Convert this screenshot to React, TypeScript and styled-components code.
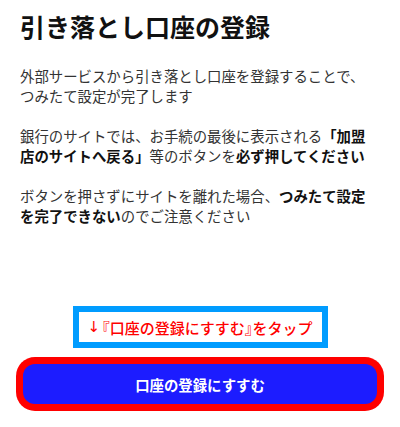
import styled, { createGlobalStyle } from 'styled-components';

const GlobalStyle = createGlobalStyle`
	html, body {
		margin: 0;
		padding: 0;
		background: #fff;
	}
	body {
		font-family: "Noto Sans CJK JP", "Noto Sans", sans-serif;
		-webkit-font-smoothing: antialiased;
	}
`;

const Page = styled.div`
	display: flex;
	flex-direction: column;
	height: 427px;
	box-sizing: border-box;
	padding: 9px 20px 23px;
`;

const Title = styled.h1`
	margin: 0;
	font-size: 25px;
	line-height: 35px;
	font-weight: 700;
	color: #111;
	white-space: nowrap;
`;

const Body = styled.div`
	display: flex;
	flex-direction: column;
	gap: 20px;
	margin-top: 22px;
`;

const Paragraph = styled.p`
	margin: 0;
	font-size: 14.4px;
	line-height: 20px;
	color: #333;
	white-space: nowrap;

	strong {
		font-weight: 700;
		color: #111;
	}
`;

const Footer = styled.div`
	margin-top: auto;
	display: flex;
	flex-direction: column;
	align-items: center;
	gap: 16px;
`;

const Hint = styled.div`
	box-sizing: border-box;
	width: 255px;
	height: 42px;
	border: 6px solid #009cff;
	display: flex;
	align-items: center;
	justify-content: center;
	font-size: 15px;
	font-weight: 500;
	color: #ff0000;
	white-space: nowrap;
`;

const Arrow = styled.span`
	font-family: "DejaVu Sans", sans-serif;
	font-size: 15px;
	margin-right: 2px;
`;

const Bracket = styled.span`
	font-feature-settings: "halt";
`;

const PrimaryButton = styled.button`
	width: 354px;
	height: 40px;
	margin: 0 2px;
	border: none;
	border-radius: 12px;
	background: #1c1cff;
	color: #fff;
	font-family: inherit;
	font-size: 14.4px;
	font-weight: 700;
	box-shadow: 0 0 0 7px #ff0000;
	cursor: pointer;
`;

export default function App() {
	return (
		<>
			<GlobalStyle />
			<Page>
				<Title>引き落とし口座の登録</Title>
				<Body>
					<Paragraph>
						外部サービスから引き落とし口座を登録することで、
						<br />
						つみたて設定が完了します
					</Paragraph>
					<Paragraph>
						銀行のサイトでは、お手続の最後に表示される<strong>「加盟</strong>
						<br />
						<strong>店のサイトへ戻る」</strong>等のボタンを<strong>必ず押してください</strong>
					</Paragraph>
					<Paragraph>
						ボタンを押さずにサイトを離れた場合、<strong>つみたて設定</strong>
						<br />
						<strong>を完了できない</strong>のでご注意ください
					</Paragraph>
				</Body>
				<Footer>
					<Hint>
						<Arrow>↓</Arrow>
						<Bracket>『</Bracket>口座の登録にすすむ<Bracket>』</Bracket>をタップ
					</Hint>
					<PrimaryButton>口座の登録にすすむ</PrimaryButton>
				</Footer>
			</Page>
		</>
	);
}
